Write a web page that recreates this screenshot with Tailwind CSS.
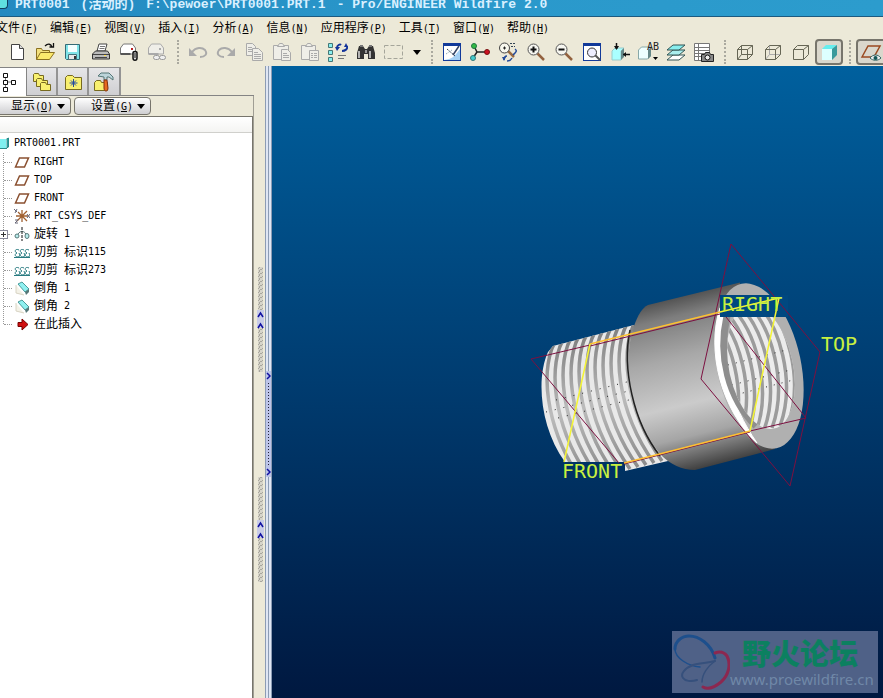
<!DOCTYPE html>
<html lang="zh-CN">
<head>
    <meta charset="UTF-8">
    <meta name="viewport" content="width=device-width, initial-scale=1.0">
    <title>PRT0001 - Pro/ENGINEER Wildfire 2.0</title>
    <script src="https://cdn.jsdelivr.net/npm/@tailwindcss/browser@4"></script>
</head>

<body class="flex h-screen flex-col overflow-hidden bg-[#ece9d8] font-['DejaVu_Sans_Mono','Noto_Sans_CJK_SC',monospace] text-xs text-black">

    <!-- Title bar -->
    <header class="flex h-4 shrink-0 gap-[11px] overflow-hidden bg-linear-to-r from-[#2389c0] via-[#2a98cb] to-[#2c9ccd] font-['Liberation_Mono','Noto_Sans_CJK_SC',monospace] text-[13px] leading-[9px] font-bold whitespace-nowrap text-[#d9f0ff]">
        <span class="-mr-1 h-[9px] w-2 shrink-0 rounded-br border-r border-b border-[#104060] bg-[#5fe0e0]"></span>
        <span>PRT0001</span>
        <span>(活动的)</span>
        <span>F:\pewoer\PRT0001.PRT.1</span>
        <span>- Pro/ENGINEER Wildfire 2.0</span>
    </header>

    <!-- Menu bar -->
    <nav class="flex h-[22px] shrink-0 items-center gap-3 border-t border-[#1c5a80] text-[12px] whitespace-nowrap">
        <a href="#" class="-ml-[4px]">文件<span class="text-[10px]">(<u>F</u>)</span></a>
        <a href="#">编辑<span class="text-[10px]">(<u>E</u>)</span></a>
        <a href="#">视图<span class="text-[10px]">(<u>V</u>)</span></a>
        <a href="#">插入<span class="text-[10px]">(<u>I</u>)</span></a>
        <a href="#">分析<span class="text-[10px]">(<u>A</u>)</span></a>
        <a href="#">信息<span class="text-[10px]">(<u>N</u>)</span></a>
        <a href="#">应用程序<span class="text-[10px]">(<u>P</u>)</span></a>
        <a href="#">工具<span class="text-[10px]">(<u>T</u>)</span></a>
        <a href="#">窗口<span class="text-[10px]">(<u>W</u>)</span></a>
        <a href="#">帮助<span class="text-[10px]">(<u>H</u>)</span></a>
    </nav>

    <!-- Toolbar -->
    <div class="flex h-7 shrink-0 items-center overflow-hidden pl-[3px]">
        <button aria-label="新建" class="flex h-7 w-7 shrink-0 items-center justify-center">
            <svg width="20" height="20" viewBox="0 0 20 20"><path d="M4.500 2.500h8l4 4v11h-12z" fill="#fff" stroke="#444"/><path d="M12.500 2.500v4h4" fill="#ddd" stroke="#444"/></svg>
        </button>
        <button aria-label="打开" class="flex h-7 w-7 shrink-0 items-center justify-center">
            <svg width="20" height="20" viewBox="0 0 20 20"><path d="M1.500 17.500V6.500h5l1 2h7v3" fill="#f3e07c" stroke="#8a7020"/><path d="M1.500 17.500l4-7h14l-5 7z" fill="#fbe96c" stroke="#8a7020"/><path d="M10 4c3-3 6-2 7 1M14.500 5h4V1" fill="none" stroke="#111" stroke-width="1.300"/></svg>
        </button>
        <button aria-label="保存" class="flex h-7 w-7 shrink-0 items-center justify-center">
            <svg width="20" height="20" viewBox="0 0 20 20"><path d="M2.500 2.500h14v15h-13l-1-1z" fill="#7fe4e8" stroke="#356b76"/><path d="M5 3h9v7H5z" fill="#f4ffff"/><path d="M5.500 12.500h8v5h-8z" fill="#e8e8e8" stroke="#47727a"/><path d="M11 14h2v3h-2z" fill="#333"/></svg>
        </button>
        <button aria-label="打印" class="flex h-7 w-7 shrink-0 items-center justify-center">
            <svg width="20" height="20" viewBox="0 0 20 20"><path d="M6 9l2-7h8l-2 7z" fill="#fff" stroke="#444"/><path d="M9 4.500h5M8.500 6.500h5" stroke="#777"/><path d="M1.500 12l3-3h12l2 3v5h-17z" fill="#bbb" stroke="#333"/><path d="M2 12.500h16M4 15.500h12" stroke="#444"/><path d="M13 13h2v1h-2z" fill="#fd4"/></svg>
        </button>
        <button aria-label="发送邮件" class="flex h-7 w-7 shrink-0 items-center justify-center">
            <svg width="20" height="20" viewBox="0 0 20 20"><path d="M1.500 12V6l3-4h9l3 4v6z" fill="#fff" stroke="#777"/><path d="M1.500 12h10" stroke="#555" stroke-width="2"/><path d="M12 6h2v2h-2z" fill="#b22"/><path d="M14 11c0-2 4-2 4 0v5c0 3-4 3-4 0z" fill="#ddd" stroke="#111" stroke-width="1.500"/><path d="M16 11v5" stroke="#111"/></svg>
        </button>
        <button aria-label="发送链接" class="flex h-7 w-7 shrink-0 items-center justify-center">
            <svg width="20" height="20" viewBox="0 0 20 20"><path d="M1.500 12V6l3-4h9l3 4v6z" fill="#efeee8" stroke="#aaa"/><path d="M12 6h2v2h-2z" fill="#aaa"/><path d="M1.500 12h10" stroke="#aaa" stroke-width="2"/><rect x="6.500" y="13.500" width="6" height="4" rx="2" fill="#eee" stroke="#999"/><rect x="12.500" y="13.500" width="6" height="4" rx="2" fill="#eee" stroke="#999"/></svg>
        </button>
        <span class="flex h-6 w-[13px] shrink-0 justify-center"><span class="border-l-2 border-dotted border-[#aaa99f]"></span></span>
        <button aria-label="撤消" class="flex h-7 w-7 shrink-0 items-center justify-center">
            <svg width="20" height="20" viewBox="0 0 20 20"><path d="M4 10c4-5 10-5 13-2 3 4 0 7-5 7" fill="none" stroke="#aaa" stroke-width="2"/><path d="M1 6v8h8z" fill="#aaa"/></svg>
        </button>
        <button aria-label="重做" class="flex h-7 w-7 shrink-0 items-center justify-center">
            <svg width="20" height="20" viewBox="0 0 20 20"><path d="M16 10C12 5 6 5 3 8c-3 4 0 7 5 7" fill="none" stroke="#aaa" stroke-width="2"/><path d="M19 6v8h-8z" fill="#aaa"/></svg>
        </button>
        <button aria-label="复制" class="flex h-7 w-7 shrink-0 items-center justify-center">
            <svg width="20" height="20" viewBox="0 0 20 20" fill="#efeee8" stroke="#aaa"><path d="M2.500 1.500h6l3 3v9h-9z"/><path d="M4 5.500h4M4 7.500h5M4 9.500h5"/><path d="M8.500 6.500h6l4 4v8h-10z"/><path d="M10 10.500h4M10 12.500h7M10 14.500h7M10 16.500h7"/></svg>
        </button>
        <button aria-label="粘贴" class="flex h-7 w-7 shrink-0 items-center justify-center">
            <svg width="20" height="20" viewBox="0 0 20 20" fill="#efeee8" stroke="#aaa"><path d="M1.500 3.500h15v14h-15z"/><path d="M5.500 4.500l2-3h3l2 3z"/><path d="M9.500 7.500h6l3 3v8h-9z"/><path d="M11 11.500h4M11 13.500h6M11 15.500h6"/></svg>
        </button>
        <button aria-label="选择性粘贴" class="flex h-7 w-7 shrink-0 items-center justify-center">
            <svg width="20" height="20" viewBox="0 0 20 20" fill="#efeee8" stroke="#aaa"><path d="M1.500 3.500h14v14h-14z"/><path d="M5.500 4.500l2-3h3l2 3z"/><path d="M9.500 8.500h9v10h-9z"/><path d="M11 11.500h2M14 11.500h3M11 13.500h2M14 13.500h3M11 15.500h2M14 15.500h3"/></svg>
        </button>
        <button aria-label="再生" class="flex h-7 w-7 shrink-0 items-center justify-center">
            <svg width="20" height="20" viewBox="0 0 20 20"><path d="M.500 1.500h4v4h-4zM.500 8.500h4v4h-4zM.500 15.500h4v4h-4z" fill="#8ee" stroke="#477"/><path d="M10 13.500h8M10 16.500h6" stroke="#777"/><path d="M9 6c0-3 3-4 4-3M19 4c1 3-2 5-5 5" fill="none" stroke="#14349a" stroke-width="2"/><path d="M7 5h5l-3 4zM16 5h4l-2-4z" fill="#14349a"/></svg>
        </button>
        <button aria-label="查找" class="flex h-7 w-7 shrink-0 items-center justify-center">
            <svg width="20" height="20" viewBox="0 0 20 20"><path d="M3 4h4l2 3h2l2-3h4l2 7v6h-7v-5H8v5H1v-6z" fill="#333"/><path d="M4 3h3v2H4zM13 3h3v2h-3z" fill="#777"/><path d="M3 9v7M14 9v7" stroke="#ddd" stroke-width="1.500"/><path d="M9 8h2v3H9z" fill="#999"/></svg>
        </button>
        <button aria-label="选取框" class="flex h-7 w-7 shrink-0 items-center justify-center">
            <svg width="20" height="20" viewBox="0 0 20 20"><rect x=".500" y="3.500" width="18" height="13" fill="none" stroke="#a5a59a" stroke-dasharray="4 2"/></svg>
        </button>
        <button aria-label="选取选项" class="flex h-7 w-[17px] shrink-0 items-center justify-center">
            <svg width="8" height="5" viewBox="0 0 8 5"><path d="M0 0h8L4 5z"/></svg>
        </button>
        <span class="flex h-6 w-[13px] shrink-0 justify-center"><span class="border-l-2 border-dotted border-[#aaa99f]"></span></span>
        <button aria-label="重画" class="flex h-7 w-7 shrink-0 items-center justify-center">
            <svg width="20" height="20" viewBox="0 0 20 20"><rect x="1.500" y="1.500" width="17" height="17" fill="#fff" stroke="#123a9a"/><path d="M1 1h18v3H1z" fill="#123a9a"/><path d="M2 18c8-1 10-3 16-11v11z" fill="#a4d0f4"/><path d="M17 4l-6 9" stroke="#346" stroke-width="1.500"/><path d="M5 7l8 7" stroke="#345" stroke-dasharray="2 1"/><path d="M4 12l6-4" stroke="#79a" stroke-dasharray="1 1"/></svg>
        </button>
        <button aria-label="旋转中心" class="flex h-7 w-7 shrink-0 items-center justify-center">
            <svg width="20" height="20" viewBox="0 0 20 20"><path d="M4 4l3 6h9M7 10l-4 6" fill="none" stroke="#222" stroke-width="1.500"/><circle cx="4" cy="4" r="2.500" fill="#3b4" stroke="#274"/><circle cx="17" cy="10" r="2.500" fill="#c12" stroke="#711"/><circle cx="3" cy="16" r="2.500" fill="#4cc" stroke="#377"/></svg>
        </button>
        <button aria-label="定向模式" class="flex h-7 w-7 shrink-0 items-center justify-center">
            <svg width="20" height="20" viewBox="0 0 20 20"><path d="M10 9l6 6" stroke="#9a6a40" stroke-width="2.500"/><circle cx="6.500" cy="6" r="5" fill="#f8f8ee" stroke="#444"/><path d="M5 6h3M6.500 4.500v3" stroke="#222"/><path d="M12 1.500h6M13 4.500h4" stroke="#345" stroke-dasharray="2 1"/><path d="M17 7c3 2 0 4-2 6M6 18c0-3 1-4 3-4M9 19c3 0 4-1 5-3" fill="none" stroke="#234a9a" stroke-width="1.500"/><path d="M4 15h4l-2 4z" fill="#234a9a"/></svg>
        </button>
        <button aria-label="放大" class="flex h-7 w-7 shrink-0 items-center justify-center">
            <svg width="20" height="20" viewBox="0 0 20 20"><path d="M11 11l7 7" stroke="#93623f" stroke-width="2.500"/><circle cx="7.500" cy="7.500" r="5.500" fill="#f6f6f0" stroke="#555"/><path d="M4.500 7.500h6M7.500 4.500v6" stroke="#111" stroke-width="2"/></svg>
        </button>
        <button aria-label="缩小" class="flex h-7 w-7 shrink-0 items-center justify-center">
            <svg width="20" height="20" viewBox="0 0 20 20"><path d="M11 11l7 7" stroke="#93623f" stroke-width="2.500"/><circle cx="7.500" cy="7.500" r="5.500" fill="#f6f6f0" stroke="#555"/><path d="M4.500 7.500h6" stroke="#111" stroke-width="2"/></svg>
        </button>
        <button aria-label="重新调整" class="flex h-7 w-7 shrink-0 items-center justify-center">
            <svg width="20" height="20" viewBox="0 0 20 20"><rect x="1.500" y="1.500" width="17" height="17" fill="#fff" stroke="#123a9a"/><path d="M1 1h18v3H1z" fill="#123a9a"/><path d="M13 13l5 5" stroke="#555" stroke-width="2"/><circle cx="10" cy="10.500" r="4.500" fill="#eef" stroke="#333"/></svg>
        </button>
        <button aria-label="定向" class="flex h-7 w-7 shrink-0 items-center justify-center">
            <svg width="20" height="20" viewBox="0 0 20 20"><path d="M2 9l3-3h9l-3 3v9H2z" fill="#aff" stroke="#9cc"/><path d="M11 9l3-3v9l-3 3z" fill="#688"/><path d="M6.500 1v6M13 12.500h7" stroke="#111" stroke-width="1.500"/><path d="M4 4h5l-2.500 4zM16 10v5l-3-2.500z" fill="#111"/></svg>
        </button>
        <button aria-label="保存的视图列表" class="flex h-7 w-7 shrink-0 items-center justify-center">
            <svg width="22" height="20" viewBox="0 0 22 20"><path d="M1.500 8l3-3h9v9l-3 3h-9z" fill="#eff" stroke="#88a8a8"/><path d="M11 8l3-3v9l-3 3z" fill="#688"/><text x="10" y="8" font-size="10" fill="#222">AB</text><path d="M16 15h5l-2.500 3z"/></svg>
        </button>
        <button aria-label="层" class="flex h-7 w-7 shrink-0 items-center justify-center">
            <svg width="20" height="20" viewBox="0 0 20 20" stroke="#355"><path d="M1 18l6-5h12l-6 5z" fill="#fff"/><path d="M1 13l6-5h12l-6 5z" fill="#aee"/><path d="M1 8l6-5h12l-6 5z" fill="#8ee"/></svg>
        </button>
        <button aria-label="视图管理器" class="flex h-7 w-7 shrink-0 items-center justify-center">
            <svg width="22" height="20" viewBox="0 0 22 20"><path d="M1.500 1.500h15v17h-15zM5.500 1.500v17M1 5.500h16M1 8.500h16M1 11.500h16M1 14.500h16" fill="#fff" stroke="#777"/><path d="M8.500 12.500h3l1-2h4l1 2h3v7h-12z" fill="#888" stroke="#222"/><circle cx="14.500" cy="15.500" r="2.500" fill="#eee" stroke="#111"/></svg>
        </button>
        <span class="flex h-6 w-[13px] shrink-0 justify-center"><span class="border-l-2 border-dotted border-[#aaa99f]"></span></span>
        <button aria-label="线框" class="flex h-7 w-7 shrink-0 items-center justify-center">
            <svg width="20" height="20" viewBox="0 0 20 20" fill="none" stroke="#665"><path d="M2.500 7.500h10v10h-10zM6.500 3.500h11v9h-11zM2.500 7.500l4-4M12.500 7.500l5-4M12.500 17.500l5-5M2.500 17.500l4-5"/></svg>
        </button>
        <button aria-label="隐藏线" class="flex h-7 w-7 shrink-0 items-center justify-center">
            <svg width="20" height="20" viewBox="0 0 20 20" fill="none" stroke="#665"><path d="M6.500 3.500v9h11M2.500 17.500l4-5" stroke="#aaa"/><path d="M2.500 7.500h10v10h-10zM2.500 7.500l4-4h11v9l-5 5M12.500 7.500l5-4"/></svg>
        </button>
        <button aria-label="无隐藏线" class="flex h-7 w-7 shrink-0 items-center justify-center">
            <svg width="20" height="20" viewBox="0 0 20 20" fill="none" stroke="#665"><path d="M2.500 7.500h10v10h-10zM2.500 7.500l4-4h11v9l-5 5M12.500 7.500l5-4"/></svg>
        </button>
        <button aria-label="着色" aria-pressed="true" class="flex h-[26px] w-7 shrink-0 items-center justify-center rounded-sm border-2 border-[#77756c] bg-[#dad7cc]">
            <svg width="20" height="20" viewBox="0 0 20 20"><path d="M3 7h10v11H3z" fill="#dff"/><path d="M3 7l4-4h11l-5 4z" fill="#6ee"/><path d="M13 7l5-4v10l-5 5z" fill="#3a9a9c"/></svg>
        </button>
        <span class="flex h-6 w-[13px] shrink-0 justify-center"><span class="border-l-2 border-dotted border-[#aaa99f]"></span></span>
        <button aria-label="基准平面开关" aria-pressed="true" class="flex h-[26px] w-8 shrink-0 items-center justify-center rounded-sm border-2 border-[#77756c] bg-[#dad7cc]">
            <svg width="24" height="20" viewBox="0 0 24 20"><path d="M2 15L8 4h12l-6 11z" fill="none" stroke="#9a4a20" stroke-width="1.500"/><path d="M10 16c3-4 8-4 11 0-3 3-8 3-11 0z" fill="#eee" stroke="#366"/><circle cx="15.500" cy="16" r="2" fill="#155"/></svg>
        </button>
    </div>

    <main class="flex min-h-0 flex-1">

        <!-- Model tree panel -->
        <aside class="flex w-[254px] shrink-0 flex-col">
            <div class="flex h-[30px] shrink-0 items-end">
                <button aria-label="模型树" class="flex h-[29px] w-[27px] items-center border-t border-r border-[#848484] bg-white">
                    <svg width="18" height="20" viewBox="0 0 18 20" fill="#fff" stroke="#111"><path d="M5.500 4v12M5.500 10h6" stroke="#777"/><path d="M3.500 1.500h4v4h-4zM3.500 8.500h4v4h-4zM3.500 15.500h4v4h-4zM11.500 8.500h4v4h-4z"/></svg>
                </button>
                <div class="flex h-[29px] flex-1 border-b border-[#848484]">
                    <button aria-label="文件夹浏览器" class="flex w-[31px] items-center justify-center border-t border-r-2 border-[#949494] bg-linear-to-b from-[#e6e6e8] to-[#cfcfd2]">
                        <svg width="20" height="20" viewBox="0 0 20 20" fill="#f8f070" stroke="#776a20"><path d="M1.500 9.500v-7l1-1h4l1 2h4v6z"/><path d="M4.500 14.500v-7l1-1h4l1 2h5v6z"/><path d="M8.500 18.500v-7l1-1h4l1 2h4v6z"/></svg>
                    </button>
                    <button aria-label="收藏夹" class="flex w-[31px] items-center justify-center border-t border-r-2 border-[#949494] bg-linear-to-b from-[#e6e6e8] to-[#cfcfd2]">
                        <svg width="20" height="20" viewBox="0 0 20 20"><path d="M2.500 17.500v-12l2-2h5l2 2h7v12z" fill="#f8f070" stroke="#776a20"/><path d="M10.500 7v8M6.500 11h8M8 8.500l5 5M13 8.500l-5 5" stroke="#234aa0"/></svg>
                    </button>
                    <button aria-label="连接" class="flex w-[32px] items-center justify-center border-t border-r-2 border-[#949494] bg-linear-to-b from-[#e6e6e8] to-[#cfcfd2]">
                        <svg width="22" height="22" viewBox="0 0 22 22"><path d="M1.500 19.500v-8l2-2h4l1 2h6v8z" fill="#f8f070" stroke="#776a20"/><path d="M5 5l3-3h8l4 4v3l-4-3h-2v3h-3V6z" fill="#bcd4da" stroke="#577"/><path d="M11 9h3l1 8c0 4-4 4-4 0z" fill="#e86a20" stroke="#843010"/></svg>
                    </button>
                </div>
            </div>

            <div class="flex min-h-0 flex-1 flex-col border-r border-[#a09e94]">
                <div class="flex h-5 shrink-0 items-center gap-[3px] text-[12px]">
                    <button class="flex h-[18px] w-[71px] items-center justify-end gap-1 rounded-r-sm border border-l-0 border-[#77756c] bg-linear-to-b from-white to-[#cfcfd2] pr-[5px]">
                        <span>显示<span class="text-[10px]">(<u>O</u>)</span></span>
                        <svg width="8" height="5" viewBox="0 0 8 5"><path d="M0 0h8L4 5z"/></svg>
                    </button>
                    <button class="flex h-[18px] w-[77px] items-center justify-end gap-1 rounded-sm border border-[#77756c] bg-linear-to-b from-white to-[#cfcfd2] pr-[5px]">
                        <span>设置<span class="text-[10px]">(<u>G</u>)</span></span>
                        <svg width="8" height="5" viewBox="0 0 8 5"><path d="M0 0h8L4 5z"/></svg>
                    </button>
                </div>
                <div class="min-h-0 flex-1 border-t border-r border-[#77756c] bg-white">
                    <div class="h-4 border-b border-[#d0d0cc] bg-linear-to-b from-white to-[#f4f4f2]"></div>
                    <div class="flex h-[20px] items-center gap-[5px] text-[10px]">
                        <svg width="9" height="12" viewBox="0 0 9 12"><path d="M0 2h6v9H0z" fill="#7ff0f0"/><path d="M6.500 2l2-1v9l-2 1M0 11.500h7" fill="#2a9a9a" stroke="#2a8a8a"/></svg>
                        <span>PRT0001.PRT</span>
                    </div>
                    <ul class="relative whitespace-nowrap">
                        <li class="absolute top-0 left-[3px] h-[171px] border-l border-dotted border-[#999]" aria-hidden="true"></li>
                        <li class="flex h-[18px] items-center pl-1 text-[10px]"><span class="w-2 border-t border-dotted border-[#999]"></span>
                            <svg class="mr-1 ml-0.5" width="16" height="14" viewBox="0 0 16 14"><path d="M1.500 12l4-9h9l-4 9z" fill="none" stroke="#8a5030" stroke-width="1.500"/></svg>RIGHT</li>
                        <li class="flex h-[18px] items-center pl-1 text-[10px]"><span class="w-2 border-t border-dotted border-[#999]"></span>
                            <svg class="mr-1 ml-0.5" width="16" height="14" viewBox="0 0 16 14"><path d="M1.500 12l4-9h9l-4 9z" fill="none" stroke="#8a5030" stroke-width="1.500"/></svg>TOP</li>
                        <li class="flex h-[18px] items-center pl-1 text-[10px]"><span class="w-2 border-t border-dotted border-[#999]"></span>
                            <svg class="mr-1 ml-0.5" width="16" height="14" viewBox="0 0 16 14"><path d="M1.500 12l4-9h9l-4 9z" fill="none" stroke="#8a5030" stroke-width="1.500"/></svg>FRONT</li>
                        <li class="flex h-[18px] items-center pl-1 text-[10px]"><span class="w-2 border-t border-dotted border-[#999]"></span>
                            <svg class="mr-1 ml-0.5" width="16" height="16" viewBox="0 0 16 16" fill="none"><path d="M8 2v12M2 8h12M3 13L13 3M4 4l9 9" stroke="#a06030" stroke-width="1.300"/><path d="M0 1l3 3M3 1L1 5M13 6l3 4M16 6l-3 4M1 12h3l-3 3h3" stroke="#667"/></svg>PRT_CSYS_DEF</li>
                        <li class="flex h-[18px] items-center text-[12px]"><button aria-label="展开" class="relative h-[9px] w-2 border border-l-0 border-[#889] bg-white"><svg class="block" width="7" height="7" viewBox="0 0 7 7"><path d="M1 3.500h5M3.500 1v5" stroke="#333"/></svg></button><span class="w-1 border-t border-dotted border-[#999]"></span>
                            <svg class="mr-1 ml-0.5" width="16" height="16" viewBox="0 0 16 16" fill="#bee" stroke="#577"><circle cx="3" cy="10" r="2"/><ellipse cx="13" cy="10" rx="2" ry="2.500"/><path d="M4 8c3-4 6-3 8 0" fill="none"/><path d="M8 1v14" stroke="#111" stroke-dasharray="3 1"/></svg>旋转<span class="ml-[6px] text-[10px]">1</span></li>
                        <li class="flex h-[18px] items-center pl-1 text-[12px]"><span class="w-2 border-t border-dotted border-[#999]"></span>
                            <svg class="mr-1 ml-0.5" width="16" height="14" viewBox="0 0 16 14" fill="none" stroke="#277a80"><path d="M5 5c-4-2-5 2-2 3-3 1-2 4 1 4 2 0 2-2 1-4M10 5c-4-2-5 2-2 3-3 1-2 4 1 4 2 0 2-2 1-4M15 5c-4-2-5 2-2 3-3 1-2 4 1 4 2 0 2-2 1-4M0 12.500h16"/></svg>切剪<span class="w-[6px]"></span>标识<span class="text-[10px]">115</span></li>
                        <li class="flex h-[18px] items-center pl-1 text-[12px]"><span class="w-2 border-t border-dotted border-[#999]"></span>
                            <svg class="mr-1 ml-0.5" width="16" height="14" viewBox="0 0 16 14" fill="none" stroke="#277a80"><path d="M5 5c-4-2-5 2-2 3-3 1-2 4 1 4 2 0 2-2 1-4M10 5c-4-2-5 2-2 3-3 1-2 4 1 4 2 0 2-2 1-4M15 5c-4-2-5 2-2 3-3 1-2 4 1 4 2 0 2-2 1-4M0 12.500h16"/></svg>切剪<span class="w-[6px]"></span>标识<span class="text-[10px]">273</span></li>
                        <li class="flex h-[18px] items-center pl-1 text-[12px]"><span class="w-2 border-t border-dotted border-[#999]"></span>
                            <svg class="mr-1 ml-0.5" width="16" height="16" viewBox="0 0 16 16"><path d="M2 5v8l8 2" fill="#f4f2e8" stroke="#d8d4c4"/><path d="M4 4l4-2 7 7-4 3z" fill="#8ff0f0" stroke="#4a9a9a"/><path d="M11 12l4-3v3l-3 3z" fill="#577"/></svg>倒角<span class="ml-[6px] text-[10px]">1</span></li>
                        <li class="flex h-[18px] items-center pl-1 text-[12px]"><span class="w-2 border-t border-dotted border-[#999]"></span>
                            <svg class="mr-1 ml-0.5" width="16" height="16" viewBox="0 0 16 16"><path d="M2 5v8l8 2" fill="#f4f2e8" stroke="#d8d4c4"/><path d="M4 4l4-2 7 7-4 3z" fill="#8ff0f0" stroke="#4a9a9a"/><path d="M11 12l4-3v3l-3 3z" fill="#577"/></svg>倒角<span class="ml-[6px] text-[10px]">2</span></li>
                        <li class="flex h-[18px] items-center pl-1 text-[12px]"><span class="w-2 border-t border-dotted border-[#999]"></span>
                            <svg class="mr-1 ml-0.5" width="16" height="14" viewBox="0 0 16 14"><path d="M4 5.500h4V2l6 5.500L8 13V9.500H4z" fill="#d01010" stroke="#700"/></svg>在此插入</li>
                    </ul>
                </div>
            </div>
        </aside>

        <!-- Splitters -->
        <div class="flex w-[11px] shrink-0 flex-col items-end pt-[201px] pr-px">
            <svg width="7" height="316" viewBox="0 0 7 316">
                <defs>
                    <pattern id="grip" width="4" height="4" patternUnits="userSpaceOnUse"><path d="M0 0h4v4H0z" fill="#d6d4ca"/><path d="M0 3l3-3M2 4l2-2" stroke="#a8a69c"/></pattern>
                </defs>
                <path d="M1 0h5v105H1zM1 210h5v105H1z" fill="url(#grip)"/>
                <path d="M0 43h7v18H0zM0 253h7v18H0z" fill="#c8cce8"/>
                <path d="M1 50l2.500-4L6 50M1 61l2.500-4L6 61M1 260l2.500-4L6 260M1 271l2.500-4L6 271" fill="none" stroke="#1010a0" stroke-width="1.500"/>
            </svg>
        </div>
        <div class="flex w-[7px] shrink-0 flex-col border-x border-[#8c9cb4] bg-[#dfe6f4]">
            <div class="mx-auto h-[305px] w-px bg-[#8c9cb4]"></div>
            <svg width="5" height="106" viewBox="0 0 5 106"><path d="M0 0h5v106H0z" fill="#bcc4e8"/><path d="M2.500 12v82" stroke="#223" stroke-dasharray="1 2"/><path d="M1 2l3 3-3 3M1 98l3 3-3 3" fill="none" stroke="#1010a0" stroke-width="1.500"/></svg>
            <div class="mx-auto w-px flex-1 bg-[#8c9cb4]"></div>
        </div>

        <!-- Graphics window -->
        <section class="relative min-w-0 flex-1 overflow-hidden bg-linear-to-b from-[#00609e] via-[#003c70] to-[#001840]">
            <svg class="absolute inset-0 h-full w-full" viewBox="272 66 611 632" preserveAspectRatio="xMinYMin meet">
                <defs>
                    <linearGradient id="body" gradientUnits="userSpaceOnUse" x1="678" y1="294" x2="720" y2="465">
                        <stop offset="0" stop-color="#4c4c4c"/>
                        <stop offset="0.120" stop-color="#7d7d7d"/>
                        <stop offset="0.350" stop-color="#a8a8a8"/>
                        <stop offset="0.620" stop-color="#cbcbcb"/>
                        <stop offset="0.800" stop-color="#a5a5a5"/>
                        <stop offset="1" stop-color="#3c3c3c"/>
                    </linearGradient>
                    <linearGradient id="groove" gradientUnits="userSpaceOnUse" x1="590" y1="335" x2="620" y2="470">
                        <stop offset="0" stop-color="#808080"/>
                        <stop offset="0.500" stop-color="#bcbcbc"/>
                        <stop offset="1" stop-color="#8c8c8c"/>
                    </linearGradient>
                    <path id="turn" d="M554 338C534 366 541 430 578 482"/>
                    <path id="innerTurn" d="M722 308C748 332 764 390 748 434"/>
                    <clipPath id="male"><path d="M553 346L634 325L668 461L625 471V462H565C540 428 536 378 548 352z"/></clipPath>
                    <clipPath id="bore"><ellipse cx="761" cy="367" rx="32" ry="63" transform="rotate(-12 761 367)"/></clipPath>
                </defs>

                <!-- External thread -->
                <g clip-path="url(#male)">
                    <path d="M530 310h150v170H530z" fill="#e9e9e9"/>
                    <g fill="none" stroke="url(#groove)" stroke-width="3.500">
                        <use href="#turn" x="4" y="-1"/><use href="#turn" x="12" y="-3"/><use href="#turn" x="20" y="-5"/>
                        <use href="#turn" x="28" y="-7"/><use href="#turn" x="36" y="-9"/><use href="#turn" x="44" y="-11"/>
                        <use href="#turn" x="52" y="-13"/><use href="#turn" x="60" y="-15"/><use href="#turn" x="68" y="-17"/>
                        <use href="#turn" x="76" y="-19"/><use href="#turn" x="84" y="-21"/><use href="#turn" x="92" y="-23"/>
                    </g>
                    <path d="M556 400l110-28M558 418l110-28M546 412l110-28" stroke="#222" stroke-dasharray="1 8"/>
                </g>

                <!-- Body and end face -->
                <path d="M634 326C638 315 642 308 648 305L740 282.500L775 449L695 470C682 470 670 464 661 455C634 425 620 365 634 326z" fill="url(#body)"/>
                <path d="M630 330C622 368 633 422 660 456" fill="none" stroke="#222" stroke-width="1.500"/>
                <ellipse cx="759" cy="366" rx="42" ry="84" transform="rotate(-12 759 366)" fill="#b0b0b0"/>
                <path d="M720 308C706 350 721 410 757 443C731 405 714 355 725 308z" fill="#fff" stroke="#fff"/>
                <path d="M727 316C718 355 728 398 756 426" fill="none" stroke="#8e8e8e" stroke-width="7"/>
                <g clip-path="url(#bore)">
                    <path d="M720 300h85v135h-85z" fill="#ececec"/>
                    <g fill="none" stroke="#9c9c9c" stroke-width="3.500">
                        <use href="#innerTurn" x="-24" y="6"/><use href="#innerTurn" x="-16" y="4"/><use href="#innerTurn" x="-8" y="2"/>
                        <use href="#innerTurn" x="0" y="0"/><use href="#innerTurn" x="8" y="-2"/><use href="#innerTurn" x="16" y="-4"/>
                        <use href="#innerTurn" x="24" y="-6"/><use href="#innerTurn" x="32" y="-8"/><use href="#innerTurn" x="40" y="-10"/>
                    </g>
                    <path d="M728 365l66-17M732 385l66-17M735 395l66-17" stroke="#222" stroke-dasharray="1 7"/>
                </g>
                <path d="M720 295h68v22h-68z" fill="#004880"/>

                <!-- Datum planes -->
                <g fill="none" stroke="#7c1040">
                    <path d="M731 244L701 379L790 486L820 352z"/>
                    <path d="M590 345L531 359L619 463M726 317L806 418L750 431"/>
                    <path d="M590 346L720 314M624 464L750 432"/>
                </g>
                <path d="M590 344L720 312M750 431L624 463" stroke="#ffc030" stroke-width="1.500" fill="none"/>
                <path d="M720 312L779 298L750 431M590 344L564 462" stroke="#f4f434" stroke-width="1.500" fill="none"/>
                <g fill="#c8f040" font-size="20" font-family="'DejaVu Sans Mono',monospace">
                    <text x="722" y="311">RIGHT</text>
                    <text x="821" y="351">TOP</text>
                    <text x="562" y="478">FRONT</text>
                </g>
            </svg>

            <!-- Forum watermark -->
            <div class="absolute right-[5px] bottom-[5px] flex h-[62px] w-[206px] bg-[#4f6187]">
                <svg class="shrink-0" width="58" height="62" viewBox="0 0 58 62" fill="none" stroke-linecap="round">
                    <path d="M28 36C16 35 3 27 3 18" stroke="#1d4f8c" stroke-width="1.500"/>
                    <path d="M3 18C3 10 10 5 17 5c10 0 22 8 26 22" stroke="#1d4f8c" stroke-width="3"/>
                    <path d="M43 30c-8 2-16 2-22 4-8 3-13 9-10 13 2 3 8 4 14 2" stroke="#36507c" stroke-width="2"/>
                    <path d="M43 30c-7 5-13 13-13 21" stroke="#36507c" stroke-width="1.500"/>
                    <path d="M43 22c5-2 9-1 12 3 4 8 2 19-6 26-6 5-13 8-18 5" stroke="#8c2850" stroke-width="3"/>
                </svg>
                <div class="flex flex-col pt-1">
                    <span class="pl-3 text-[29px] leading-[34px] font-black font-['Noto_Sans_CJK_SC',sans-serif] whitespace-nowrap text-[#0c8060]">野火论坛</span>
                    <span class="text-[15px] leading-5 font-['Noto_Sans',sans-serif] whitespace-nowrap text-[#7088a8]">www.proewildfire.cn</span>
                </div>
            </div>
        </section>
    </main>

</body>
</html>
